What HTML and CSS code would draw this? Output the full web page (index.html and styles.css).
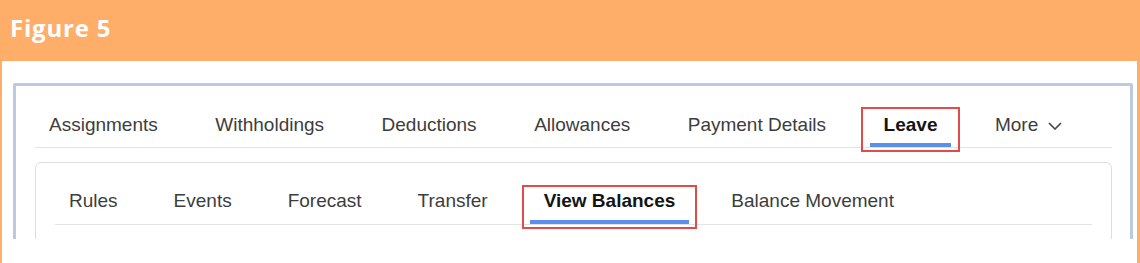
FILE: index.html
```html
<!DOCTYPE html>
<html lang="en">

<head>
    <meta charset="UTF-8">
    <meta name="viewport" content="width=device-width, initial-scale=1.0">
    <title>Figure 5</title>
    <link rel="stylesheet" href="styles.css">
</head>

<body>
    <div class="figure">
        <div class="figure-head">Figure 5</div>
        <div class="figure-body">
            <div class="shot">
                <div class="frame">
                    <nav class="tabs">
                        <span class="tab">Assignments</span>
                        <span class="tab">Withholdings</span>
                        <span class="tab">Deductions</span>
                        <span class="tab">Allowances</span>
                        <span class="tab">Payment Details</span>
                        <span class="tab active callout">Leave</span>
                        <span class="tab more">More
                            <svg viewBox="0 0 14 8" class="chevron">
                                <path d="M1 1l6 6 6-6"></path>
                            </svg>
                        </span>
                    </nav>
                    <div class="card">
                        <nav class="tabs sub-tabs">
                            <span class="tab">Rules</span>
                            <span class="tab">Events</span>
                            <span class="tab">Forecast</span>
                            <span class="tab">Transfer</span>
                            <span class="tab active callout">View Balances</span>
                            <span class="tab">Balance Movement</span>
                        </nav>
                    </div>
                </div>
            </div>
        </div>
    </div>
</body>

</html>
```

FILE: styles.css
```css
body {
    margin: 0;
    padding: 0;
    background: #fff;
    font-family: "Liberation Sans", Arial, sans-serif;
}

.figure {
    width: 1140px;
}

.figure-head {
    height: 61px;
    background: #ffae69;
    color: #fff;
    font-family: "Open Sans", sans-serif;
    font-weight: 700;
    font-size: 24px;
    letter-spacing: 0.8px;
    line-height: 56px;
    padding-left: 10px;
    box-sizing: border-box;
}

.figure-body {
    height: 202px;
    border-left: 2px solid #ffae69;
    border-right: 3px solid #ffae69;
}

.shot {
    height: 178px;
    overflow: hidden;
    padding: 22px 4px 0 11px;
    box-sizing: border-box;
}

.frame {
    height: 300px;
    border: 3px solid #bccae0;
    border-radius: 2px;
    padding: 0 18px 0 19px;
}

.tabs {
    display: flex;
    gap: 29.5px;
    padding-top: 28px;
    border-bottom: 1px solid #e3e3e3;
}

.tab {
    position: relative;
    padding: 0 14px 7px;
    font-size: 19px;
    line-height: 22px;
    color: #3d3d3d;
    border-bottom: 4px solid transparent;
    white-space: nowrap;
}

.tab.active {
    font-weight: bold;
    color: #141414;
    border-bottom-color: #5a8fee;
}

/* red annotation box, measured from the padding box */
.callout::after {
    content: '';
    position: absolute;
    left: -9px;
    right: -9px;
    top: -7px;
    bottom: -9px;
    border: 2px solid #e24b47;
}

.more {
    display: flex;
    align-items: center;
}

.chevron {
    width: 14px;
    height: 8px;
    margin-left: 10px;
    margin-top: 1px;
    fill: none;
    stroke: #444;
    stroke-width: 1.6;
}

.card {
    margin-top: 14px;
    height: 300px;
    border: 1px solid #dedede;
    border-radius: 6px;
    padding: 0 19px;
}

.sub-tabs {
    gap: 28px;
    padding-top: 27px;
}

.sub-tabs .tab {
    padding-bottom: 8px;
}

.sub-tabs .callout::after {
    top: -5px;
    bottom: -9px;
    left: -8px;
    right: -8px;
}
```
